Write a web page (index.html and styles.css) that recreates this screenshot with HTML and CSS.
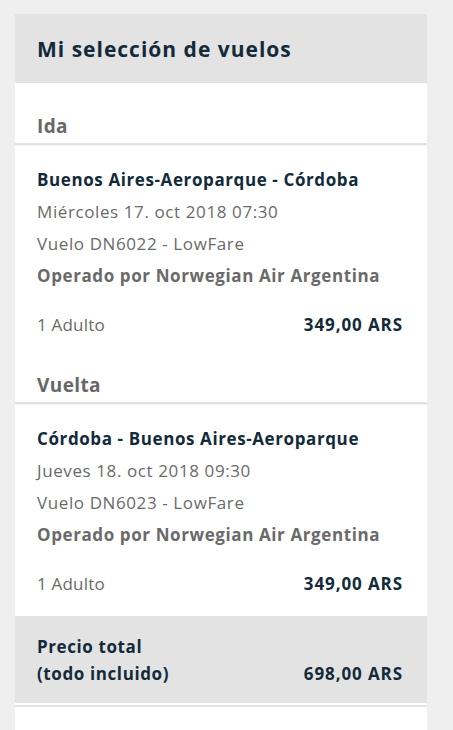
FILE: index.html
```html
<!DOCTYPE html>
<html lang="es">
<head>
<meta charset="utf-8">
<title>Mi selección de vuelos</title>
<link rel="stylesheet" href="styles.css">
</head>
<body>
<aside class="summary">
  <header class="summary-header">
    <h2 class="summary-title">Mi selección de vuelos</h2>
  </header>
  <div class="summary-body">
    <section class="leg">
      <h3 class="leg-title">Ida</h3>
      <div class="flight">
        <p class="route">Buenos Aires-Aeroparque - Córdoba</p>
        <p class="detail">Miércoles 17. oct 2018 07:30</p>
        <p class="detail">Vuelo DN6022 - LowFare</p>
        <p class="detail operator">Operado por Norwegian Air Argentina</p>
        <div class="price-row">
          <span class="pax">1 Adulto</span>
          <span class="price">349,00 ARS</span>
        </div>
      </div>
    </section>
    <section class="leg">
      <h3 class="leg-title">Vuelta</h3>
      <div class="flight">
        <p class="route">Córdoba - Buenos Aires-Aeroparque</p>
        <p class="detail">Jueves 18. oct 2018 09:30</p>
        <p class="detail">Vuelo DN6023 - LowFare</p>
        <p class="detail operator">Operado por Norwegian Air Argentina</p>
        <div class="price-row">
          <span class="pax">1 Adulto</span>
          <span class="price">349,00 ARS</span>
        </div>
      </div>
    </section>
    <div class="total">
      <span class="total-label">Precio total<br>(todo incluido)</span>
      <span class="total-price">698,00 ARS</span>
    </div>
  </div>
  <div class="summary-footer"></div>
</aside>
</body>
</html>
```

FILE: styles.css
```css
* { box-sizing: border-box; }
html, body { margin: 0; padding: 0; }
body {
  background: #efefef;
  font-family: "Open Sans", "Liberation Sans", sans-serif;
  color: #132a3a;
  height: 730px;
  overflow: hidden;
}
.summary {
  width: 412px;
  margin: 14px 0 0 15px;
}
.summary-header {
  background: #e3e3e3;
  height: 69px;
  padding: 0 22px;
  display: flex;
  align-items: center;
}
.summary-title {
  margin: 0;
  font-size: 21px;
  font-weight: 700;
  color: #132a3a;
  letter-spacing: 1px;
}
.summary-body {
  background: #fff;
  padding-top: 15px;
}
.leg-title {
  margin: 0;
  padding: 16px 22px 5px;
  line-height: 24px;
  font-size: 19px;
  font-weight: 700;
  letter-spacing: 0.4px;
  color: #676767;
  border-bottom: 2px solid #e2e2e2;
  box-shadow: 0 1px 0 #f3f3f3;
}
.flight {
  padding: 19px 24px 16px 22px;
}
.flight p {
  margin: 0;
  line-height: 32px;
  font-size: 17px;
  letter-spacing: 0.6px;
}
.route { font-weight: 700; color: #132a3a; }
.detail { color: #6a6a6a; }
.operator { font-weight: 700; }
.price-row {
  margin-top: 17px;
  display: flex;
  justify-content: space-between;
  align-items: center;
  line-height: 32px;
  font-size: 17px;
}
.pax { color: #6a6a6a; letter-spacing: 0.2px; }
.price { font-weight: 700; color: #132a3a; letter-spacing: 0.9px; }
.total {
  background: #e3e3e3;
  padding: 17px 24px 16px 22px;
  display: flex;
  justify-content: space-between;
  align-items: flex-end;
  font-size: 17px;
  font-weight: 700;
  line-height: 27px;
  color: #132a3a;
  border-bottom: 2px solid #fff;
}
.total-label { letter-spacing: 0.6px; }
.total-price { letter-spacing: 0.9px; }
.summary-footer {
  background: #fff;
  border-top: 2px solid #e3e3e3;
  height: 40px;
}
```
